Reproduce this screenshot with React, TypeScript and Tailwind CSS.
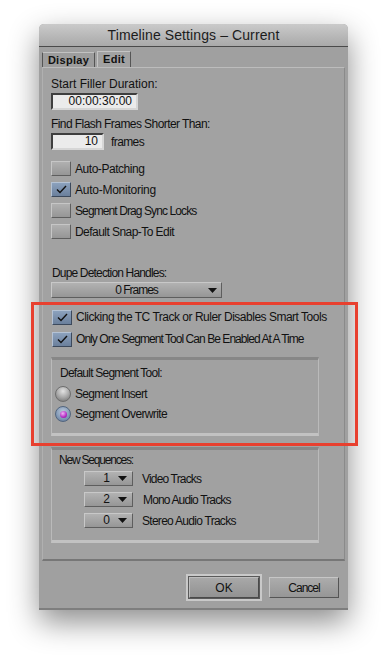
import React from "react";

const font = { fontFamily: '"Liberation Sans", Arial, sans-serif' };

function Arrow() {
  return (
    <svg width="9" height="5" viewBox="0 0 9 5">
      <path d="M0 0 L9 0 L4.5 5 Z" fill="#111" />
    </svg>
  );
}

function T({ c, children }: { c?: string; children: React.ReactNode }) {
  return <span className={`block whitespace-nowrap text-[12px] leading-[14px] text-[#111] ${c ?? ""}`}>{children}</span>;
}

function Check({ checked }: { checked?: boolean }) {
  if (checked) {
    return (
      <div className="w-[20px] h-[15px] shrink-0 border border-t-[#b4c2d4] border-l-[#b4c2d4] border-r-[#3c495c] border-b-[#3c495c] bg-linear-to-b from-[#8ba1bd] to-[#6b809c] flex items-center justify-center">
        <svg width="11" height="9" viewBox="0 0 11 9">
          <path d="M1 4.5 L4 7.5 L10 1" stroke="#111" strokeWidth="1.4" fill="none" />
        </svg>
      </div>
    );
  }
  return (
    <div className="w-[20px] h-[15px] shrink-0 border border-t-[#c6c6c6] border-l-[#c6c6c6] border-r-[#5e5e5e] border-b-[#5e5e5e] bg-linear-to-b from-[#b0b0b0] to-[#969696]" />
  );
}

function CheckRow({ checked, label, h, c }: { checked?: boolean; label: string; h: string; c: string }) {
  return (
    <div className={`flex items-center gap-[4px] ${h}`}>
      <Check checked={checked} />
      <T c={c}>{label}</T>
    </div>
  );
}

function SmallDrop({ value, label, c }: { value: string; label: string; c: string }) {
  return (
    <div className="flex items-center h-[21px]">
      <div className="w-[49px] h-[15px] border border-t-[#c8c8c8] border-l-[#c8c8c8] border-r-[#5e5e5e] border-b-[#5e5e5e] bg-linear-to-b from-[#b2b2b2] to-[#969696] flex items-center justify-end pr-[5px] gap-[8px]">
        <span className="block text-[12px] leading-[13px] text-[#111]">{value}</span>
        <Arrow />
      </div>
      <T c={c}>{label}</T>
    </div>
  );
}

export default function App() {
  return (
    <div className="relative w-[388px] h-[665px] bg-white pt-[24px] pl-[39px] overflow-hidden" style={font}>
      <div className="w-[309px] h-[586px] bg-[#a0a0a0] rounded-t-[5px] shadow-[0_12px_30px_rgba(0,0,0,0.45)] flex flex-col border-b-2 border-b-[#7e7e7e]">
        {/* Title bar */}
        <div className="h-[23px] rounded-t-[5px] bg-linear-to-b from-[#cacaca] to-[#a9a9a9] border-b border-b-[#4a4a4a] flex items-center justify-center">
          <span className="block whitespace-nowrap text-[14px] leading-[22px] text-[#1c1c1c] tracking-[0.1px]">Timeline Settings – Current</span>
        </div>
        {/* Tabs */}
        <div className="h-[20px] flex items-end pl-[3px]">
          <div className="w-[53px] h-[15px] bg-[#9d9d9d] border-t border-t-[#c2c2c2] border-l border-l-[#555] border-r border-r-[#555] flex items-center justify-center">
            <span className="block text-[11px] font-bold leading-[13px] tracking-[0.3px] text-[#111]">Display</span>
          </div>
          <div className="ml-[2px] w-[34px] h-[16px] bg-[#a2a2a2] border-t border-t-[#c4c4c4] border-l border-l-[#c4c4c4] border-r border-r-[#555] flex items-center justify-center">
            <span className="block text-[11px] font-bold leading-[13px] tracking-[0.3px] text-[#111]">Edit</span>
          </div>
        </div>
        {/* Panel */}
        <div className="mx-[3px] h-[494px] bg-[#a2a2a2] border-t border-t-[#bcbcbc] border-l border-l-[#b0b0b0] border-r border-r-[#8a8a8a] border-b-2 border-b-[#777] pl-[8px] pt-[9px] flex flex-col">
          <T>Start Filler Duration:</T>
          <div className="mt-[2px] w-[87px] h-[17px] bg-[#ebebeb] border-2 border-t-[#3e3e3e] border-l-[#3e3e3e] border-r-[#d6d6d6] border-b-[#d6d6d6] flex items-center justify-end pr-[4px]">
            <span className="block text-[12px] leading-[13px] text-[#111]">00:00:30:00</span>
          </div>
          <T c="mt-[7px] tracking-[-0.57px]">Find Flash Frames Shorter Than:</T>
          <div className="mt-[2px] flex items-center">
            <div className="w-[53px] h-[17px] bg-[#ebebeb] border-2 border-t-[#3e3e3e] border-l-[#3e3e3e] border-r-[#d6d6d6] border-b-[#d6d6d6] flex items-center justify-end pr-[4px]">
              <span className="block text-[12px] leading-[13px] text-[#111]">10</span>
            </div>
            <T c="ml-[7px] tracking-[-0.6px]">frames</T>
          </div>
          <div className="mt-[8px] flex flex-col">
            <CheckRow label="Auto-Patching" h="h-[21px]" c="tracking-[-0.46px]" />
            <CheckRow checked label="Auto-Monitoring" h="h-[21px]" c="tracking-[-0.25px]" />
            <CheckRow label="Segment Drag Sync Locks" h="h-[21px]" c="tracking-[-0.9px]" />
            <CheckRow label="Default Snap-To Edit" h="h-[21px]" c="tracking-[-0.55px]" />
          </div>
          <T c="mt-[24px] pl-[1px] tracking-[-0.83px]">Dupe Detection Handles:</T>
          <div className="mt-[2px] w-[171px] h-[16px] border border-t-[#c8c8c8] border-l-[#c8c8c8] border-r-[#5e5e5e] border-b-[#5e5e5e] bg-linear-to-b from-[#b2b2b2] to-[#969696] relative flex items-center justify-center">
            <T c="tracking-[-1px]">0 Frames</T>
            <div className="absolute right-[4px] top-[5px]"><Arrow /></div>
          </div>
          <div className="mt-[8px] pl-[1px] flex flex-col">
            <CheckRow checked label="Clicking the TC Track or Ruler Disables Smart Tools" h="h-[22px]" c="tracking-[-0.49px]" />
            <CheckRow checked label="Only One Segment Tool Can Be Enabled At A Time" h="h-[22px]" c="tracking-[-0.95px]" />
          </div>
          {/* Group 1 */}
          <div className="mt-[7px] w-[268px] h-[79px] border-t-[3px] border-t-[#878787] border-l border-l-[#bababa] border-r border-r-[#bababa] border-b-[3px] border-b-[#c2c2c2] bg-[#a1a1a1] flex flex-col">
            <T c="mt-[6px] ml-[8px] tracking-[-0.76px]">Default Segment Tool:</T>
            <div className="mt-[4px] pl-[3px] flex flex-col">
              <div className="h-[20px] flex items-center gap-[4px]">
                <div className="w-[16px] h-[16px] rounded-full border border-[#6e6e6e] bg-[radial-gradient(circle_at_50%_30%,#e2e2e2_0%,#a4a4a4_55%,#6c6c6c_100%)]" />
                <T c="tracking-[-0.67px]">Segment Insert</T>
              </div>
              <div className="h-[20px] flex items-center gap-[4px]">
                <div className="w-[16px] h-[16px] rounded-full border border-[#52657e] bg-[radial-gradient(circle_at_50%_35%,#bccadb_0%,#8299b6_60%,#5b7190_100%)] flex items-center justify-center">
                  <div className="w-[7px] h-[7px] rounded-full bg-[radial-gradient(circle_at_40%_35%,#f0b4f6_0%,#b42cc4_60%,#7a1088_100%)]" />
                </div>
                <T c="tracking-[-0.63px]">Segment Overwrite</T>
              </div>
            </div>
          </div>
          {/* Group 2 */}
          <div className="mt-[11px] w-[268px] h-[96px] border-t-[3px] border-t-[#878787] border-l border-l-[#bababa] border-r border-r-[#bababa] border-b-[3px] border-b-[#c2c2c2] bg-[#a1a1a1] flex flex-col">
            <T c="mt-[3px] ml-[7px] tracking-[-1.2px]">New Sequences:</T>
            <div className="mt-[1px] pl-[32px] flex flex-col">
              <SmallDrop value="1" label="Video Tracks" c="ml-[9px] tracking-[-0.83px]" />
              <SmallDrop value="2" label="Mono Audio Tracks" c="ml-[10px] tracking-[-0.85px]" />
              <SmallDrop value="0" label="Stereo Audio Tracks" c="ml-[9px] tracking-[-0.72px]" />
            </div>
          </div>
        </div>
        {/* Footer */}
        <div className="flex-1 flex justify-end items-start pt-[13px] pr-[9px] gap-[7px]">
          <div className="w-[76px] h-[27px] border-2 border-[#c9c9c9] bg-[#5a5a5a] p-[1px]">
            <div className="w-full h-full border border-t-[#bdbdbd] border-l-[#bdbdbd] border-r-[#4a4a4a] border-b-[#4a4a4a] bg-linear-to-b from-[#a8a8a8] to-[#929292] flex items-center justify-center">
              <T>OK</T>
            </div>
          </div>
          <div className="mt-[3px] w-[70px] h-[21px] border border-t-[#c6c6c6] border-l-[#c6c6c6] border-r-[#555] border-b-[#555] bg-linear-to-b from-[#acacac] to-[#969696] flex items-center justify-center">
            <T c="tracking-[-1px]">Cancel</T>
          </div>
        </div>
      </div>
      {/* Red annotation box */}
      <div className="absolute left-[31px] top-[302px] w-[327px] h-[144px] border-[3px] border-[#e8402f]" />
    </div>
  );
}
